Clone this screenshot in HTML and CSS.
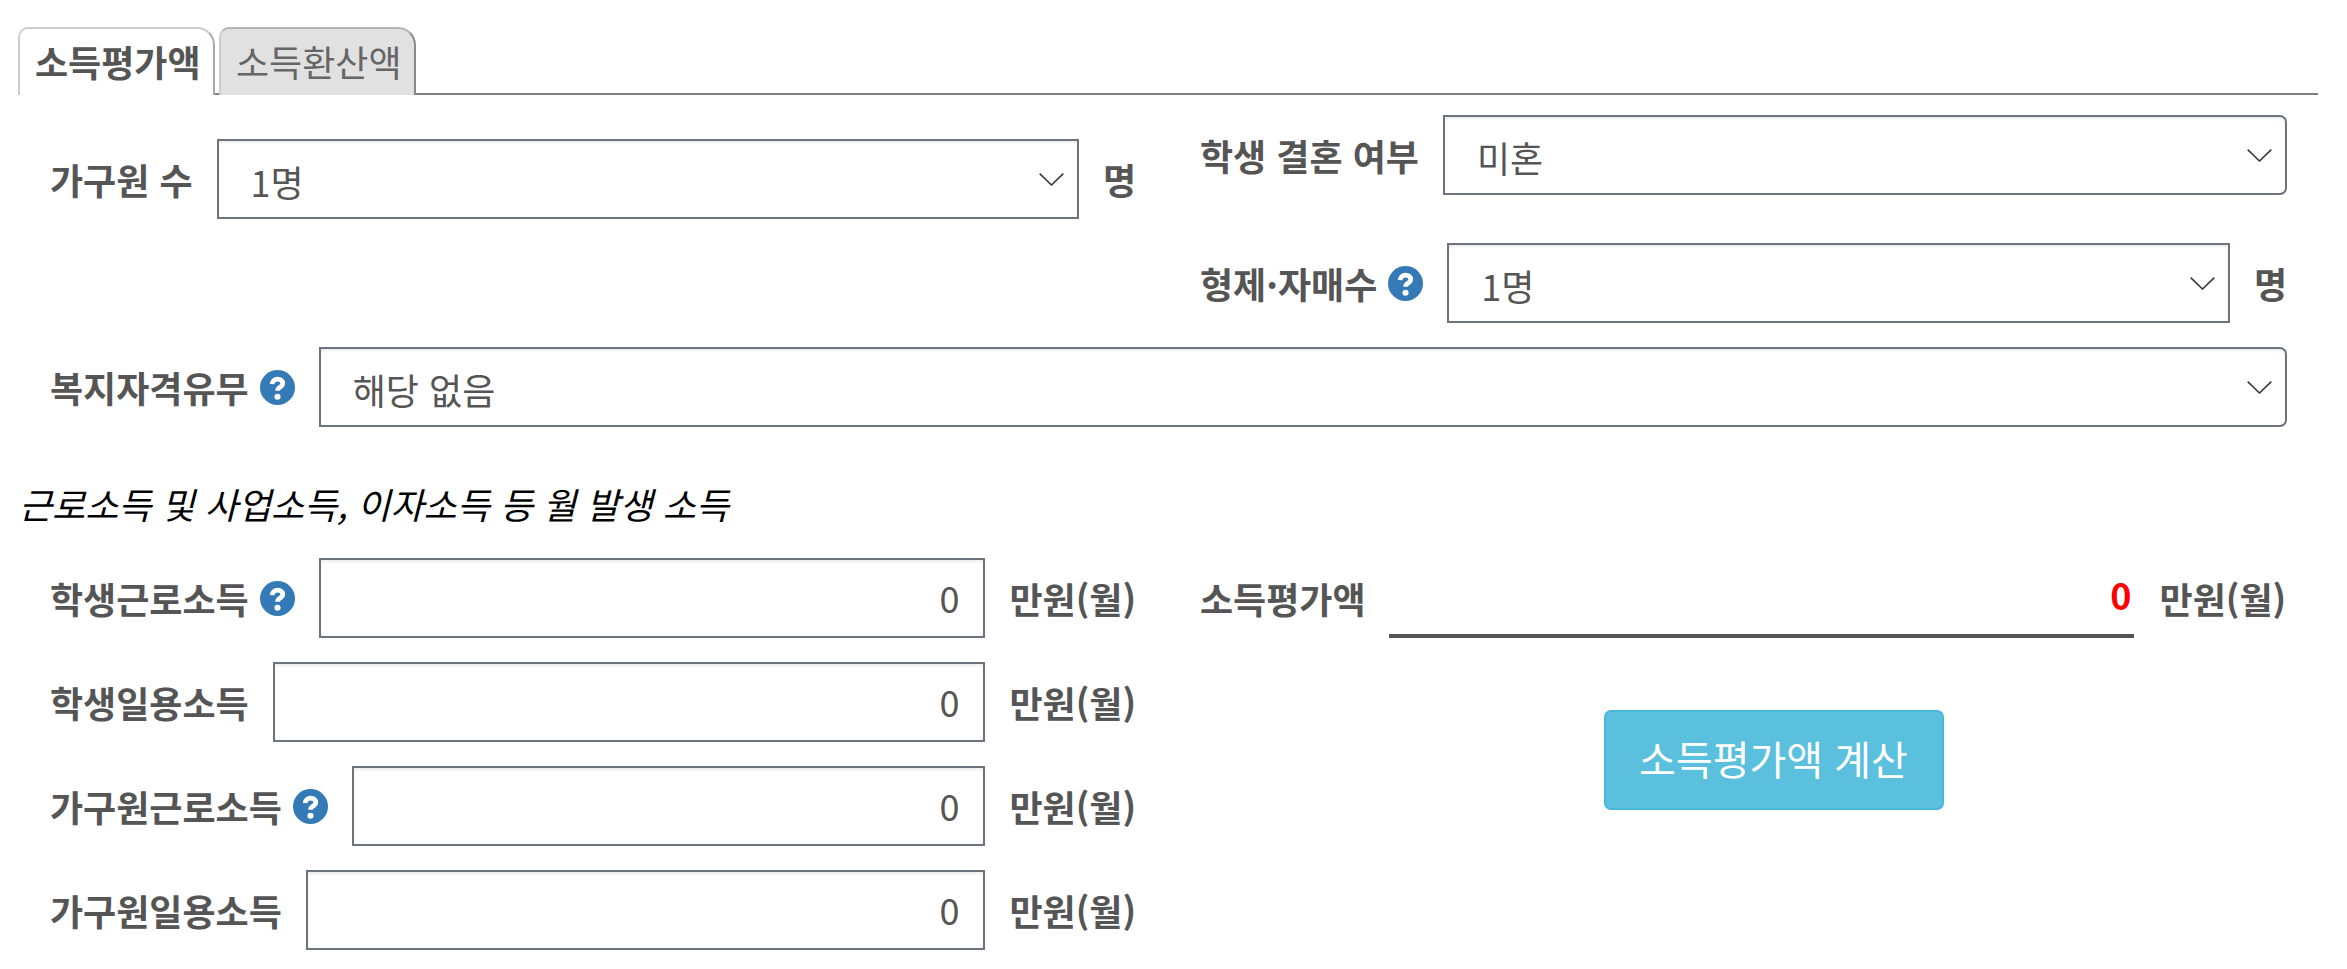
FILE: index.html
```html
<!DOCTYPE html>
<html lang="ko">
<head>
<meta charset="utf-8">
<title>소득평가액</title>
<link rel="stylesheet" href="styles.css">
</head>
<body>
<svg class="defs" width="0" height="0" aria-hidden="true">
  <symbol id="help" viewBox="0 0 24 24">
    <circle cx="12" cy="12" r="12" fill="#337ab7"/>
    <path d="M8.3 9.7c.2-2.1 1.7-3.4 3.8-3.4 2.1 0 3.5 1.2 3.5 2.8 0 1.5-1 2.1-2 2.7-1 .6-1.6 1.1-1.6 2.5" fill="none" stroke="#fff" stroke-width="3.2"/>
    <circle cx="12" cy="18.3" r="2.1" fill="#fff"/>
  </symbol>
  <symbol id="chev" viewBox="0 0 25 13">
    <path d="M.7.7 12.5 12 24.3.7" fill="none" stroke="#343a40" stroke-width="1.6"/>
  </symbol>
</svg>
<main class="page">
  <nav class="tabs">
    <a class="tab tab-active">소득평가액</a>
    <a class="tab">소득환산액</a>
  </nav>
  <form class="form">
    <div class="cols">
      <div class="col col-offset">
        <div class="field">
          <label class="label">가구원 수</label>
          <div class="select-box"><select class="select"><option>1명</option></select><svg class="chev"><use href="#chev"/></svg></div>
          <span class="label">명</span>
        </div>
      </div>
      <div class="col col-stack">
        <div class="field">
          <label class="label">학생 결혼 여부</label>
          <div class="select-box"><select class="select rounded"><option>미혼</option></select><svg class="chev"><use href="#chev"/></svg></div>
        </div>
        <div class="field">
          <label class="label">형제·자매수<svg class="help"><use href="#help"/></svg></label>
          <div class="select-box"><select class="select"><option>1명</option></select><svg class="chev"><use href="#chev"/></svg></div>
          <span class="label">명</span>
        </div>
      </div>
    </div>
    <div class="field field-welfare">
      <label class="label">복지자격유무<svg class="help"><use href="#help"/></svg></label>
      <div class="select-box"><select class="select rounded"><option>해당 없음</option></select><svg class="chev"><use href="#chev"/></svg></div>
    </div>
    <p class="note">근로소득 및 사업소득, 이자소득 등 월 발생 소득</p>
    <div class="cols">
      <div class="col income-rows">
        <div class="field">
          <label class="label">학생근로소득<svg class="help"><use href="#help"/></svg></label>
          <input class="input" value="0">
          <span class="label">만원(월)</span>
        </div>
        <div class="field">
          <label class="label">학생일용소득</label>
          <input class="input" value="0">
          <span class="label">만원(월)</span>
        </div>
        <div class="field">
          <label class="label">가구원근로소득<svg class="help"><use href="#help"/></svg></label>
          <input class="input" value="0">
          <span class="label">만원(월)</span>
        </div>
        <div class="field">
          <label class="label">가구원일용소득</label>
          <input class="input" value="0">
          <span class="label">만원(월)</span>
        </div>
      </div>
      <div class="col">
        <div class="field result">
          <span class="label">소득평가액</span>
          <output class="result-value">0</output>
          <span class="label">만원(월)</span>
        </div>
        <div class="action">
          <button type="button" class="btn">소득평가액 계산</button>
        </div>
      </div>
    </div>
  </form>
</main>
</body>
</html>
```
FILE: styles.css
```css
* { box-sizing: border-box; }
html, body { margin: 0; background: #fff; }
body {
  font-family: "Noto Sans CJK KR", "Noto Sans", sans-serif;
  font-size: 36px;
  color: #555;
}
.defs { position: absolute; }
.page { padding: 27px 29px 0 18px; }

.tabs {
  display: flex;
  gap: 4px;
  height: 68px;
  border-bottom: 2px solid #7f7f7f;
}
.tab {
  flex: none;
  width: 197px;
  height: 68px;
  padding-left: 15px;
  line-height: 65px;
  font-size: 36px;
  white-space: nowrap;
  color: #666;
  background: #e1e1e1;
  border: 2px solid #b5b5b5;
  border-bottom: 0;
  border-right-color: #8a8a8a;
  border-left-color: #ccc;
  border-radius: 10px 18px 0 0;
}
.tab-active {
  background: #fff;
  color: #555;
  font-weight: 700;
  border-color: #ccc;
  border-right-color: #aaa;
}

.form { padding: 20px 31px 0 32px; }
.cols {
  display: grid;
  grid-template-columns: 1086px 1087px;
  column-gap: 64px;
}
.col-offset { padding-top: 24px; }
.col-stack { display: flex; flex-direction: column; gap: 48px; }
.field {
  display: flex;
  align-items: center;
  gap: 24px;
  height: 80px;
}
.field-welfare { margin-top: 24px; }
.label {
  display: flex;
  align-items: center;
  gap: 11px;
  flex: none;
  font-size: 36px;
  font-weight: 700;
  color: #555;
  white-space: pre;
}
.help { width: 35px; height: 35px; flex: none; }

.select-box { position: relative; flex: 1; min-width: 0; height: 80px; }
.select, .input {
  width: 100%;
  height: 80px;
  font: 400 36px "Noto Sans CJK KR", "Noto Sans", sans-serif;
  color: #555;
  background: #fff;
  border: 2px solid #6c757d;
  border-radius: 0;
  outline: 0;
  box-shadow: inset 0 2px 3px rgba(0, 0, 0, .075);
}
.select {
  appearance: none;
  -webkit-appearance: none;
  padding: 4px 60px 0 32px;
}
.rounded { border-radius: 0 7px 7px 0; }
.chev {
  position: absolute;
  top: 34px;
  right: 15px;
  width: 25px;
  height: 13px;
  pointer-events: none;
}
.input {
  flex: 1;
  min-width: 0;
  padding: 0 24px 2px 0;
  text-align: right;
}

.note {
  margin: 51px 0 30px -31px;
  height: 50px;
  line-height: 50px;
  font-size: 36px;
  font-style: italic;
  color: #000;
}

.income-rows { display: flex; flex-direction: column; gap: 24px; }
.result { gap: 0; }
.result-value {
  flex: none;
  width: 745px;
  height: 80px;
  margin: 0 26px 0 23px;
  padding-right: 2px;
  line-height: 72px;
  text-align: right;
  font-weight: 700;
  color: #f00;
  border-bottom: 4px solid #555;
}
.action { display: flex; justify-content: center; padding: 72px 0 0 60px; }
.btn {
  width: 340px;
  height: 100px;
  padding: 0 0 4px;
  font: 400 40px "Noto Sans CJK KR", "Noto Sans", sans-serif;
  color: #fff;
  background: #5bc0de;
  border: 2px solid #46b8da;
  border-radius: 7px;
}
```
